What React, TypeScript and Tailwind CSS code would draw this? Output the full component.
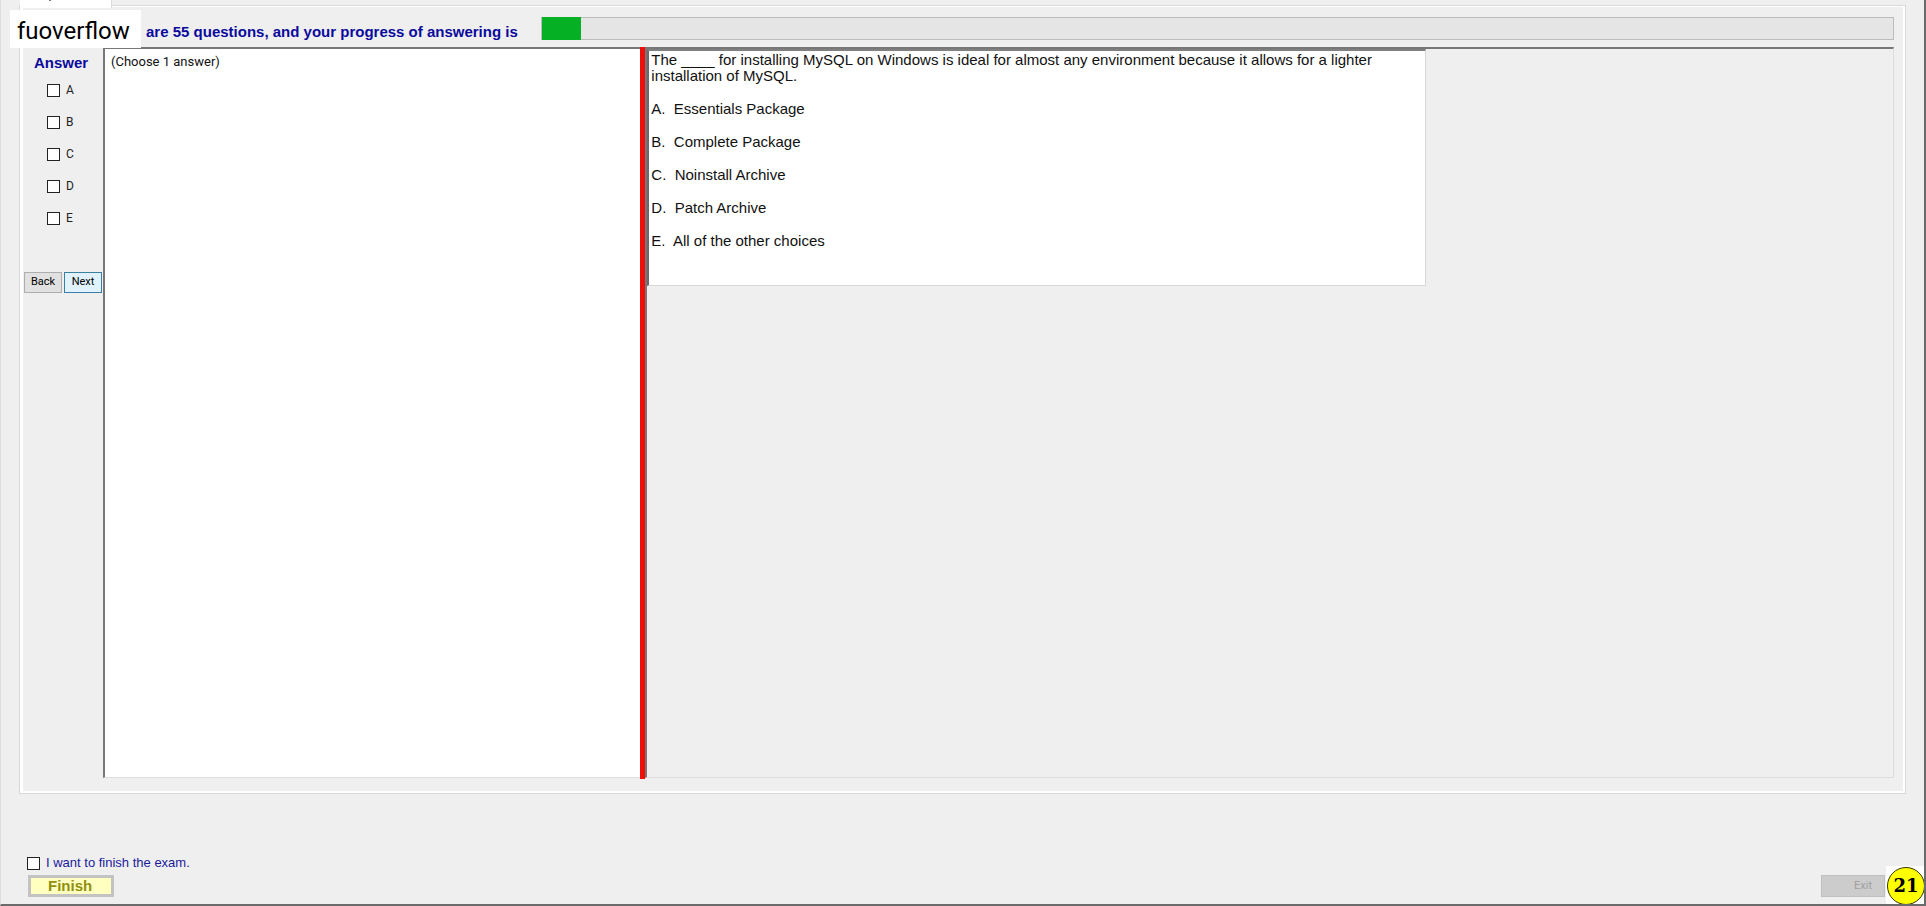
const CHOICES = ["A", "B", "C", "D", "E"];

const OPTIONS = [
  "A.  Essentials Package",
  "B.  Complete Package",
  "C.  Noinstall Archive",
  "D.  Patch Archive",
  "E.  All of the other choices",
];

const checkboxClass = "size-[13px] shrink-0 appearance-none border border-[#222222] bg-white checked:bg-[#222222]";

const ProgressHeader = ({ total, answered }: { total: number; answered: number }) => {
  return (
    <header className="relative flex h-10 items-start pt-[10px] pr-[9px]">
      <div className="absolute top-[3px] -left-[13px] flex h-[38px] w-[131px] items-center bg-white pt-1 pl-[7px] font-[Roboto,sans-serif] text-2xl leading-8 text-black">
        fuoverflow
      </div>
      <label
        htmlFor="progress"
        className="w-[518px] shrink-0 pt-[6px] pl-[123px] text-[15px] leading-[18px] font-bold whitespace-nowrap text-[#0a0a9c]"
      >
        are {total} questions, and your progress of answering is
      </label>
      <div
        id="progress"
        role="progressbar"
        aria-valuenow={answered}
        aria-valuemax={total}
        className="h-[23px] flex-1 border border-[#bcbcbc] bg-[#e5e5e5]"
      >
        <div className="-mt-px h-[23px] w-[39px] bg-[#06b025]" />
      </div>
    </header>
  );
};

const AnswerSidebar = () => {
  return (
    <aside className="w-20 shrink-0 font-[Roboto,sans-serif]">
      <h2 className="pt-[7px] pl-[11px] font-['Liberation_Sans',Arial,sans-serif] text-[15px] leading-[18px] font-bold text-[#0a0a9c]">
        Answer
      </h2>
      <div className="flex flex-col gap-4 pt-[10px] pl-6">
        {CHOICES.map((choice) => (
          <label key={choice} className="flex h-4 items-center gap-1.5 text-xs text-[#222222]">
            <input type="checkbox" className={checkboxClass} />
            {choice}
          </label>
        ))}
      </div>
      <div className="mt-[46px] flex gap-0.5 pl-px text-[11px] text-black">
        <button className="h-[21px] w-[38px] border border-[#adadad] bg-[#e1e1e1]">Back</button>
        <button className="h-[21px] w-[38px] border border-[#3c7fa6] bg-[#e0f3fd]">Next</button>
      </div>
    </aside>
  );
};

const QuestionBox = () => {
  return (
    <div className="min-h-[237px] w-[62.5%] border-t-2 border-r border-b border-l-2 border-[#d8d8d8] border-t-[#808080] border-l-[#696974] bg-white pt-px pr-10 pb-7 pl-0.5 text-[15px] leading-4 text-[#111111]">
      <p>
        The ____ for installing MySQL on Windows is ideal for almost any environment because it allows for a lighter
        installation of MySQL.
      </p>
      {OPTIONS.map((option) => (
        <p key={option} className="mt-[17px] whitespace-pre">
          {option}
        </p>
      ))}
    </div>
  );
};

const Footer = () => {
  return (
    <footer className="flex h-[110px] items-end justify-between pr-[39px] pb-[7px] pl-[26px]">
      <div>
        <label className="flex items-center gap-1.5 pb-1 text-[13px] leading-4 text-[#1a1a9c]">
          <input type="checkbox" className={checkboxClass} />I want to finish the exam.
        </label>
        <button className="ml-px flex h-[22px] w-[86px] items-center border-3 border-[#c3c3c3] bg-[#ffffc0] pl-[17px] text-[15px] font-bold text-[#8f8f10]">
          Finish
        </button>
      </div>
      <button
        disabled
        className="h-[22px] w-16 border border-[#bfbfbf] bg-[#cccccc] pl-5 font-[Roboto,sans-serif] text-[11px] text-[#a0a0a0]"
      >
        Exit
      </button>
    </footer>
  );
};

const App = () => {
  return (
    <div className="relative flex min-h-screen flex-col overflow-hidden border-r-2 border-b-2 border-l border-[#6b6b6b] border-l-[#dddddd] bg-[#efefef] font-['Liberation_Sans',Arial,sans-serif]">
      <div className="relative z-10 ml-[19px] h-[5px] w-[92px] bg-white">
        <div className="absolute top-0 left-0 h-2 w-full border-r border-[#dcdcdc] bg-white" />
        <div className="absolute top-0 left-[29px] h-px w-0.5 bg-[#777777]" />
      </div>
      <main className="mr-[18px] ml-[18px] flex flex-1 flex-col border border-[#d9d9d9] bg-white pr-0.5 pb-0.5 pl-[3px]">
        <div className="mt-px flex flex-1 flex-col bg-[#efefef] pb-[13px]">
          <ProgressHeader total={55} answered={2} />
          <div className="flex flex-1 pr-[9px]">
            <AnswerSidebar />
            <div className="flex flex-1">
              <section className="w-[30%] border-t-2 border-b border-l-2 border-[#dddddd] border-t-[#777777] border-l-[#777777] bg-white pt-[5px] pl-[6px] font-[Roboto,sans-serif] text-[13px] leading-4 text-[#111111]">
                (Choose 1 answer)
              </section>
              <div className="-mb-px w-[5px] bg-[#ee0f0a]" />
              <section className="flex-1 border-t-2 border-r border-b border-l-2 border-[#dddddd] border-t-[#777777] border-l-[#777777]">
                <QuestionBox />
              </section>
            </div>
          </div>
        </div>
      </main>
      <Footer />
      <div className="absolute -right-0.5 -bottom-0.5 flex size-10 items-center justify-center bg-white">
        <div className="flex size-[38px] items-center justify-center rounded-full border border-[#333300] bg-[#ffff00] font-['DejaVu_Serif',serif] text-lg font-bold text-black">
          21
        </div>
      </div>
    </div>
  );
};

export default App;
